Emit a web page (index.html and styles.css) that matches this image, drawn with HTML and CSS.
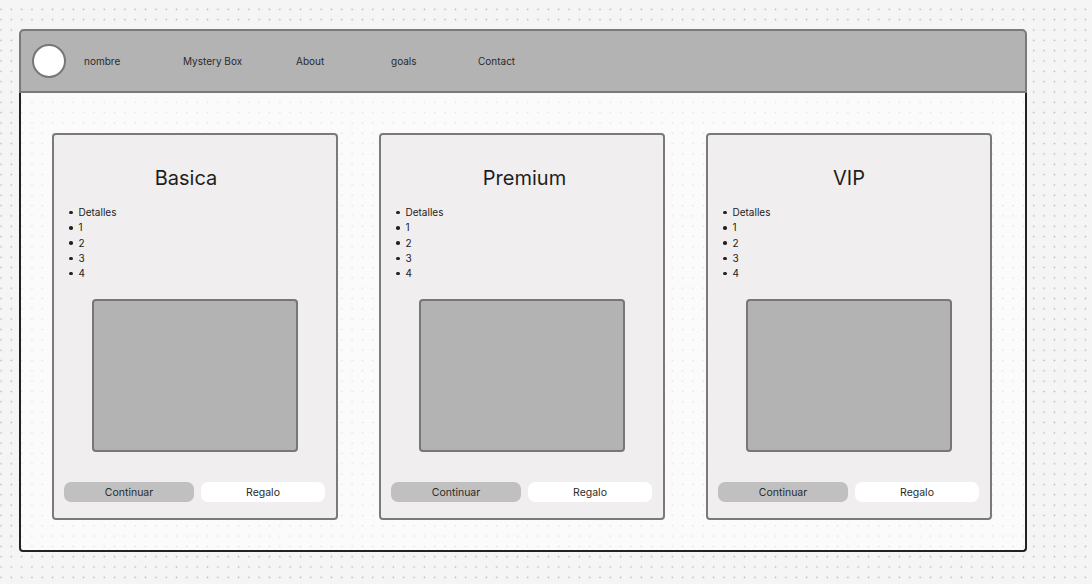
FILE: index.html
```html
<!DOCTYPE html>
<html lang="es">
<head>
    <link rel="stylesheet" href="styles.css">
</head>
<body>
    <div class="frame">
        <header class="topbar">
            <div class="logo"></div>
            <nav class="nav">
                <a class="nav-name">nombre</a>
                <a class="nav-box">Mystery Box</a>
                <a class="nav-about">About</a>
                <a class="nav-goals">goals</a>
                <a class="nav-contact">Contact</a>
            </nav>
        </header>

        <main class="content">
            <div class="card">
                <h2 class="title-basic">Basica</h2>
                <ul>
                    <li>Detalles</li>
                    <li>1</li>
                    <li>2</li>
                    <li>3</li>
                    <li>4</li>
                </ul>
                <div class="picture"></div>
                <div class="actions">
                    <button class="btn-continue">Continuar</button>
                    <button class="btn-gift">Regalo</button>
                </div>
            </div>

            <div class="card">
                <h2 class="title-premium">Premium</h2>
                <ul>
                    <li>Detalles</li>
                    <li>1</li>
                    <li>2</li>
                    <li>3</li>
                    <li>4</li>
                </ul>
                <div class="picture"></div>
                <div class="actions">
                    <button class="btn-continue">Continuar</button>
                    <button class="btn-gift">Regalo</button>
                </div>
            </div>

            <div class="card">
                <h2>VIP</h2>
                <ul>
                    <li>Detalles</li>
                    <li>1</li>
                    <li>2</li>
                    <li>3</li>
                    <li>4</li>
                </ul>
                <div class="picture"></div>
                <div class="actions">
                    <button class="btn-continue">Continuar</button>
                    <button class="btn-gift">Regalo</button>
                </div>
            </div>
        </main>
    </div>
</body>
</html>
```

FILE: styles.css
```css
* {
    box-sizing: border-box;
}
body {
    margin: 0;
    width: 1092px;
    height: 584px;
    overflow: hidden;
    font-family: Inter, "Noto Sans", sans-serif;
    color: #222;
    background-color: #f5f5f5;
    background-image: radial-gradient(circle, #bdbdbd 0.7px, transparent 1.1px);
    background-size: 10.33px 10.33px;
    background-position: -4.2px 4.2px;
}
.frame {
    margin: 29px 0 0 19px;
    width: 1008px;
}
.topbar {
    height: 64px;
    display: flex;
    align-items: center;
    padding-left: 11px;
    background-color: #b3b3b3;
    border: 2px solid #7a7a7a;
    border-radius: 5px 5px 0 0;
}
.logo {
    width: 34px;
    height: 34px;
    border-radius: 50%;
    background-color: #fff;
    border: 2px solid #777;
}
.nav {
    display: flex;
    margin-left: 18px;
    font-size: 10px;
    color: #2a2a2a;
}
.nav a {
    display: block;
}
.nav-name {
    width: 99px;
}
.nav-box {
    width: 113px;
}
.nav-about {
    width: 95px;
}
.nav-goals {
    width: 87px;
}
.content {
    display: flex;
    gap: 41px;
    height: 459px;
    padding: 40px 0 0 31px;
    background-color: rgba(255, 255, 255, 0.6);
    border: 2px solid #222;
    border-top: none;
    border-radius: 0 0 4px 4px;
}
.card {
    width: 286px;
    height: 387px;
    background-color: #f0eeef;
    border: 2px solid #7a7a7a;
    border-radius: 4px;
}
.card h2 {
    margin: 31px 0 0;
    font-size: 20px;
    font-weight: 400;
    line-height: 24px;
    text-align: center;
    color: #1e1e1e;
}
.card .title-basic {
    padding-right: 18px;
}
.card .title-premium {
    padding-left: 5px;
}
.card ul {
    margin: 15px 0 0;
    padding-left: 15px;
    list-style: none;
    font-size: 10px;
    line-height: 15.3px;
}
.card li::before {
    content: "";
    display: inline-block;
    width: 3.5px;
    height: 3.5px;
    margin: 0 6px 1.5px 0;
    border-radius: 50%;
    background-color: #222;
    vertical-align: middle;
}
.picture {
    width: 206px;
    height: 153px;
    margin: 18px auto 0;
    background-color: #b3b3b3;
    border: 2px solid #777;
    border-radius: 4px;
}
.actions {
    display: flex;
    gap: 7px;
    margin: 30px 0 0 10px;
}
.actions button {
    height: 20px;
    border: none;
    border-radius: 7px;
    font-family: Inter, "Noto Sans", sans-serif;
    font-size: 10.5px;
    color: #2a2a2a;
    padding: 0;
}
.btn-continue {
    width: 130px;
    background-color: #c0c0c0;
}
.btn-gift {
    width: 124px;
    background-color: #fff;
}
```
